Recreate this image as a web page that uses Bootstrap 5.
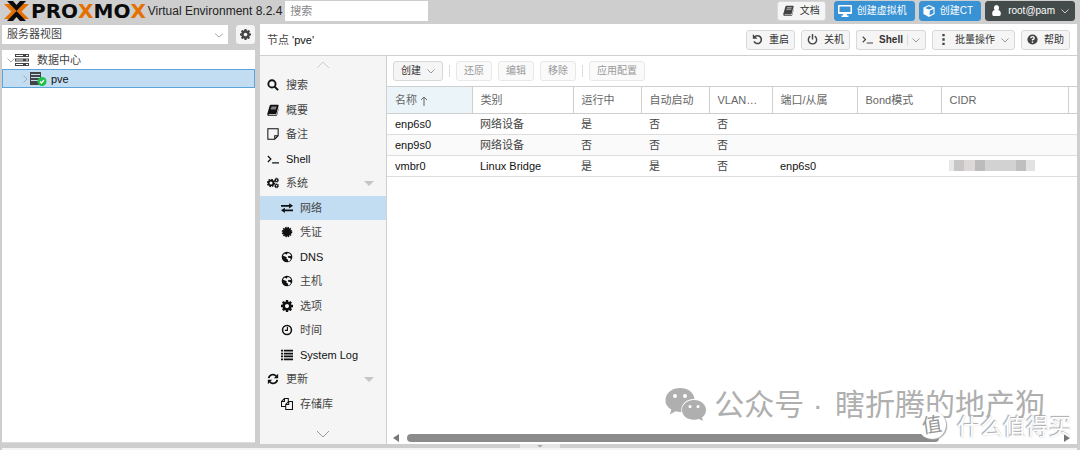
<!DOCTYPE html>
<html lang="zh-CN">
<head>
<meta charset="utf-8">
<meta name="viewport" content="width=device-width, initial-scale=1">
<title>pve - Proxmox Virtual Environment</title>
<link href="https://cdn.jsdelivr.net/npm/bootstrap@5.3.0/dist/css/bootstrap.min.css" rel="stylesheet">
<style>
body{font-family:"Liberation Sans","Noto Sans CJK SC",sans-serif;font-size:11px;line-height:16px;background:#cecece;color:#111;padding:0 3px 0 2px}
svg{fill:currentColor;flex:none}
.ln{fill:none;stroke:currentColor}
.ic{width:12px;height:12px}
.chev{width:8px;height:8px;color:#aaa}
a{color:inherit;text-decoration:none}
.zh{color:#444}
.gap-6{gap:6px}
.top-bar{height:24px;padding:0 2px 3px 1px}
.brand-word{font:bold 20px/20px "DejaVu Sans",sans-serif;color:#0b0b0b;margin-left:1px}
.brand-word b{color:#e57000}
.version{font-size:12px;color:#222;margin:0 3px 0 2px}
.find-box{width:143px;height:20px;border:0;border-radius:0;padding:0 5px;font-size:11px}
.find-box::placeholder{color:#888}
.bt{height:20px;padding:0 5px;gap:6px;font-size:10px;line-height:14px;display:inline-flex;align-items:center;border:1px solid #d8d8d8;border-radius:3px;background:#f5f5f5;color:#333;white-space:nowrap}
.bt:disabled{color:#999;background:#fafafa;border-color:#e8e8e8;opacity:1}
.bt svg{color:#444}
.bt .ic{width:11px;height:11px}
.bt .chev{color:#999}
.bt-tool{padding:0 7px}
.bt-blue,.bt-blue svg{background:#3892d4;border-color:#3892d4;color:#fff}
.bt-blue{padding:0 7px 0 3px;gap:5px}
.bt-dark,.bt-dark svg{background:#444b4b;border-color:#444b4b;color:#fff}
.bt-dark .chev{color:#ccc}
.bt-dark{gap:6px}
.vsep{width:1px;height:12px;background:#ddd}
.tool-row .vsep{margin:0 6px}
.side{width:253px}
.view-row{margin:1px 0 6px}
.view-pick{height:19px;border:0;border-radius:0;padding:0 24px 0 5px;font-size:11px;line-height:19px;color:#444;background:#fff url("data:image/svg+xml,%3Csvg xmlns='http://www.w3.org/2000/svg' viewBox='0 0 8 8'%3E%3Cpath d='M0 2.500l4 3.500 4-3.500' fill='none' stroke='%23aaa'/%3E%3C/svg%3E") no-repeat right 5px center/8px 8px}
.gear{width:19px;height:19px;padding:0;justify-content:center;border:0}
.tree-pane{background:#fff;border-bottom:1px solid #ddd;margin-bottom:1px}
.tree-row{height:19px;border:1px solid transparent;padding-left:4px}
.tree-row.on{background:#c2ddf2;border-color:#5ba4dc;padding-left:18px;color:#111}
.main-pane{margin-left:1px;min-width:0}
.title-bar{height:32px;padding:0 7px;border-bottom:1px solid #cfcfcf}
.menu{width:127px;background:#f5f5f5;border-right:1px solid #cfcfcf}
.menu a{flex:1 1 0;padding-left:7px;gap:7px}
.menu a.sub{padding-left:21px}
.menu a.on{background:#c2ddf2}
.caret{width:0;border:5px solid transparent;border-top-color:#c6c6c6;border-bottom:0;margin-left:auto;margin-right:12px}
.menu-up{height:17px}
.menu-down{height:28px}
.net-pane{min-width:0}
.tool-row{height:31px;padding:0 6px;border-bottom:1px solid #cfcfcf}
.grid{table-layout:fixed;width:100%;border-collapse:collapse}
.grid th{height:26px;font-weight:normal;color:#666;border-right:1px solid #cfcfcf;border-bottom:1px solid #cfcfcf}
.grid th:last-child{border-right:0}
.grid th:first-child{background:#eaf4f9}
.grid th,.grid td{padding:0 8px;overflow:hidden;text-overflow:ellipsis;white-space:nowrap}
.grid th:last-child,.grid td:last-child{padding:0}
.grid td{height:21px;border-bottom:1px solid #ddd}
.grid tbody tr:nth-child(2){background:#fafafa}
.masked{width:86px;height:11px;background:linear-gradient(90deg,#e8e8e8 0 6%,#c6c6c6 6% 18%,#dcd8d8 18% 30%,#bcbcbc 30% 42%,#d2d2d2 42% 78%,#bfbfbf 78% 90%,#e2e2e2 90%)}
.scroller{height:8px;margin:0 7px 2px 6px;gap:8px}
.thumb{height:8px;border-radius:4px;background:#8b8b8b}
.tri{width:6px;height:8px;color:#777}
.splitter{height:4px}
.splitter span{width:40px;height:4px;background:#e6e6e6}
.log-pane{height:2px;background:#f5f5f5}
.wm{right:35px;bottom:23px;gap:7px;color:#afafaf;font:30px/44px "Noto Sans CJK SC",sans-serif;white-space:nowrap}
.wm .dot{font-family:"Liberation Sans",sans-serif;padding-right:4px}
.wm2{right:8px;bottom:9px;gap:11px;color:#fff;font:23px/32px "Noto Sans CJK SC",sans-serif;white-space:nowrap;text-shadow:-1px -1px 1px #aaa,0 0 1px #bbb}
.wm2 i{width:28px;height:28px;border-radius:50%;background:#fff;color:#999;font:20px/26px "Noto Sans CJK SC",sans-serif;text-align:center;box-shadow:1px 1px 1px #aaa;text-shadow:none;transform:rotate(-8deg)}
</style>
</head>
<body class="d-flex flex-column min-vh-100 position-relative overflow-hidden">
<svg class="d-none">
<symbol id="gear" viewBox="0 128 1536 1536"><path fill-rule="evenodd" d="M1024 896q0 106-75 181t-181 75-181-75-75-181 75-181 181-75 181 75 75 181zm512-109v222q0 12-8 23t-20 13l-185 28q-19 54-39 91 35 50 107 138 10 12 10 25t-9 23q-27 37-99 108t-94 71q-12 0-26-9l-138-108q-44 23-91 38-16 136-29 186-7 28-36 28h-222q-14 0-24-8t-12-22l-28-184q-49-16-90-37l-141 107q-10 9-25 9-14 0-25-11-126-114-165-168-7-10-7-23 0-12 8-23 15-21 51-66t54-71q-27-50-41-99l-183-27q-13-2-21-12t-8-24v-222q0-12 8-23t19-13l186-28q14-46 39-92-40-57-107-138-10-12-10-24 0-10 9-23 26-36 98-107t95-72q13 0 26 10l138 107q44-23 91-38 16-136 29-186 7-28 36-28h222q14 0 24 8t12 22l28 184q49 16 90 37l142-107q9-9 24-9 13 0 25 10 129 119 165 170 7 8 7 22 0 12-8 23-15 21-51 66t-54 71q26 50 41 98l183 28q13 2 21 12t8 24z"/></symbol>
<symbol id="book" viewBox="0 0 14 14"><path d="M4.500 1h8.300q1 .2.700 1.200L11 11q-.3 1-1.300 1H2.500q-.8 0-.8.500t.8.500H10q1 0 1.400-1L14 4v.800L11.900 12.500Q11.400 14 10 14H2.300Q0 14 .3 11.600L3 2.200Q3.400 1 4.500 1zm.7 2.300-.3.900h6l.3-.9zm-.7 2-.3.900h6l.3-.9z" fill-rule="evenodd"/></symbol>
<symbol id="down" viewBox="0 0 8 8"><path class="ln" d="M.5 2.500 4 6l3.500-3.500"/></symbol>
<symbol id="right" viewBox="0 0 8 8"><path class="ln" d="M2.500.5 6 4 2.500 7.500"/></symbol>
<symbol id="wide-down" viewBox="0 0 14 8"><path class="ln" d="M1 1l6 6 6-6"/></symbol>
<symbol id="wide-up" viewBox="0 0 14 8"><path class="ln" d="M1 7l6-6 6 6"/></symbol>
<symbol id="prompt" viewBox="0 0 14 14"><path class="ln" stroke-width="1.400" d="M1 3.500 4.500 7 1 10.500M6 11.500h8"/></symbol>
<symbol id="globe" viewBox="0 0 14 14"><path fill-rule="evenodd" d="M7 .8a6.200 6.200 0 1 0 0 12.400A6.200 6.200 0 0 0 7 .8zm1 1.500 2.300 1 1.500 2-1.300.7-1.300-.6-1.300 1.200.4 1.200 2.300.4.900 1.300-1.500 2.200-1.500.6-.5-2.300L6.300 9l.5-1.500L5 6.300 3 5.800l-.6-.7 1.500-2 1.500.3 1 .9L7.500 3z"/></symbol>
<symbol id="refresh" viewBox="0 0 14 14"><path class="ln" stroke-width="2" d="M2 6a5 5 0 0 1 8.800-2.300M12 8a5 5 0 0 1-8.800 2.300"/><path d="M13 1v5H8zM1 13V8h5z"/></symbol>
</svg>

<header class="top-bar d-flex align-items-center">
  <svg width="27" height="20" viewBox="0 0 27 20"><path fill="#e57000" d="M1 3h6l6 6.500v1L7 18H1l7.500-7.500zM26 3h-6l-6 6.500v1l6 7.500h6l-7.500-7.500z"/><path fill="#0b0b0b" d="M4 0h6l3.500 4L17 0h6l-9.500 10zM4 20h6l3.500-4 3.500 4h6l-9.500-10z"/></svg>
  <span class="brand-word">PRO<b>X</b>MO<b>X</b></span>
  <span class="version">Virtual Environment 8.2.4</span>
  <input class="form-control find-box" type="search" placeholder="搜索" aria-label="搜索">
  <div class="d-flex ms-auto gap-1">
    <button class="bt me-1"><svg class="ic"><use href="#book"/></svg>文档</button>
    <button class="bt bt-blue"><svg width="14" height="12" viewBox="0 0 14 12"><path fill-rule="evenodd" d="M1 0h12q1 0 1 1v7q0 1-1 1H9v1.500h1.500V12h-7v-1.500H5V9H1Q0 9 0 8V1q0-1 1-1zm.5 1.500v5.500h11V1.500z"/></svg>创建虚拟机</button>
    <button class="bt bt-blue"><svg width="12" height="12" viewBox="0 0 14 14"><path fill-rule="evenodd" d="M7 0l6.500 2.800v7.800L7 14 .5 10.600V2.800zm0 1.500L2.500 3.400 7 5.300l4.500-1.900zM7.800 6.600v5.300l4.400-2.200V4.800z"/></svg>创建CT</button>
    <button class="bt bt-dark"><svg class="ic" viewBox="0 0 14 14"><path d="M7 0a3.300 3.800 0 0 1 2.300 6.500Q12.500 7 12.500 11.500 12.500 14 10.500 14h-7q-2 0-2-2.500Q1.500 7 4.700 6.500A3.300 3.800 0 0 1 7 0z"/></svg>root@pam<svg class="chev"><use href="#down"/></svg></button>
  </div>
</header>

<div class="d-flex flex-fill">
  <aside class="side flex-shrink-0 d-flex flex-column me-1">
    <div class="view-row d-flex justify-content-between">
      <select class="form-select view-pick me-2" aria-label="视图"><option>服务器视图</option></select>
      <button class="bt gear flex-shrink-0" aria-label="设置"><svg class="ic"><use href="#gear"/></svg></button>
    </div>
    <div class="tree-pane flex-fill">
      <div class="tree-row d-flex align-items-center zh"><svg class="chev"><use href="#down"/></svg>
        <svg width="14" height="12" viewBox="0 0 14 12" class="me-2"><path fill-rule="evenodd" d="M0 0h14v3H0zm0 4.500h14v3H0zM0 9h14v3H0zm1 1v1h7v-1zm0-4.500v1h7v-1zM1 1v1h7V1zm10 0v1h2V1zm0 4.500v1h2v-1zm0 4.500v1h2v-1z"/></svg>数据中心</div>
      <div class="tree-row on d-flex align-items-center"><svg class="chev"><use href="#right"/></svg>
        <svg width="18" height="14" viewBox="0 0 18 14" class="me-1"><path fill="#444" fill-rule="evenodd" d="M1 0h11v13H1zm1 2v1h9V2zm0 3v1h9V5zm0 3v1h9V8z"/><circle cx="13" cy="9.500" r="4.500" fill="#21bf4b"/><path d="M11 9.500 12.500 11l2.500-3" fill="none" stroke="#fff" stroke-width="1.300"/></svg>pve</div>
    </div>
  </aside>

  <main class="main-pane flex-fill d-flex flex-column bg-white">
    <div class="title-bar d-flex align-items-center">
      <span><span class="zh">节点</span> 'pve'</span>
      <div class="d-flex ms-auto gap-6">
        <button class="bt"><svg class="ic" viewBox="0 0 14 14"><path class="ln" stroke-width="2" d="M3 4a5 5 0 1 1-.5 5.500"/><path d="M1 0v6h6z"/></svg>重启</button>
        <button class="bt"><svg class="ic" viewBox="0 0 14 14"><path class="ln" stroke-width="1.800" d="M4.200 2.800a5.300 5.300 0 1 0 5.600 0M7 0v7"/></svg>关机</button>
        <div class="btn-group">
          <button class="bt border-end-0 rounded-end-0 pe-1"><svg class="ic"><use href="#prompt"/></svg><b>Shell</b></button>
          <button class="bt gap-1 border-start-0 rounded-start-0 ps-0" aria-label="Shell 选项"><span class="vsep"></span><svg class="chev"><use href="#down"/></svg></button>
        </div>
        <button class="bt"><svg class="ic" viewBox="0 0 14 14"><path d="M5.500 0h3v3h-3zm0 5.500h3v3h-3zm0 5.500h3v3h-3z"/></svg>批量操作<svg class="chev"><use href="#down"/></svg></button>
        <button class="bt"><svg class="ic" viewBox="0 0 14 14"><circle cx="7" cy="7" r="6.500"/><path d="M4.800 5.300Q5 3.300 7 3.300t2.200 1.800Q9.200 6.500 7 7.300v1" fill="none" stroke="#fff" stroke-width="1.700"/><path fill="#fff" d="M6.100 9.500h1.800v1.700H6.100z"/></svg>帮助</button>
      </div>
    </div>
    <div class="d-flex flex-fill">
      <nav class="menu flex-shrink-0 d-flex flex-column">
        <div class="menu-up d-flex justify-content-center align-items-center"><svg width="14" height="8" color="#ccc"><use href="#wide-up"/></svg></div>
        <a href="#" class="d-flex align-items-center zh"><svg class="ic" color="#111" viewBox="0 0 14 14"><path class="ln" stroke-width="2.200" d="M10 5.700a4.200 4.200 0 1 1-8.400 0 4.200 4.200 0 0 1 8.400 0zM9 9l4 4"/></svg>搜索</a>
        <a href="#" class="d-flex align-items-center zh"><svg class="ic" color="#111"><use href="#book"/></svg>概要</a>
        <a href="#" class="d-flex align-items-center zh"><svg class="ic" color="#111" viewBox="0 0 14 14"><path class="ln" stroke-width="1.200" d="M1 1h12v8l-4 4H1zM13 9H9v4"/></svg>备注</a>
        <a href="#" class="d-flex align-items-center"><svg class="ic"><use href="#prompt"/></svg>Shell</a>
        <a href="#" class="d-flex align-items-center zh"><svg class="ic" color="#111" viewBox="0 0 15 14"><circle cx="5" cy="7" r="3" class="ln" stroke-width="2.200"/><circle cx="5" cy="7" r="4.500" class="ln" stroke-width="1.500" stroke-dasharray="2 1.500"/><circle cx="12" cy="3.500" r="1.600" class="ln" stroke-width="1.500"/><circle cx="12" cy="3.500" r="2.600" class="ln" stroke-dasharray="1.200 .9"/><circle cx="12" cy="10.500" r="1.600" class="ln" stroke-width="1.500"/><circle cx="12" cy="10.500" r="2.600" class="ln" stroke-dasharray="1.200 .9"/></svg>系统<span class="caret"></span></a>
        <a href="#" class="sub on d-flex align-items-center zh"><svg class="ic" color="#111" viewBox="0 0 14 14"><path d="M0 3.500h9.500V1.500L14 4.500l-4.500 3V5.500H0zM14 8.700H4.500v-2L0 9.700l4.500 3v-2H14z"/></svg>网络</a>
        <a href="#" class="sub d-flex align-items-center zh"><svg class="ic" color="#111" viewBox="0 0 14 14"><circle cx="7" cy="7" r="5"/><circle cx="7" cy="7" r="5.300" class="ln" stroke-width="1.700" stroke-dasharray="1.700 1.070"/></svg>凭证</a>
        <a href="#" class="sub d-flex align-items-center"><svg class="ic"><use href="#globe"/></svg>DNS</a>
        <a href="#" class="sub d-flex align-items-center zh"><svg class="ic" color="#111"><use href="#globe"/></svg>主机</a>
        <a href="#" class="sub d-flex align-items-center zh"><svg class="ic" color="#111"><use href="#gear"/></svg>选项</a>
        <a href="#" class="sub d-flex align-items-center zh"><svg class="ic" color="#111" viewBox="0 0 14 14"><circle cx="7" cy="7" r="5.200" class="ln" stroke-width="1.800"/><path class="ln" stroke-width="1.300" d="M7.500 3.500v4H4.500"/></svg>时间</a>
        <a href="#" class="sub d-flex align-items-center"><svg class="ic" viewBox="0 0 14 14"><path d="M0 1h2.500v2H0zm3.500 0H14v2H3.500zM0 4.300h2.500v2H0zm3.500 0H14v2H3.500zM0 7.600h2.500v2H0zm3.500 0H14v2H3.500zM0 11h2.500v2H0zm3.500 0H14v2H3.500z"/></svg>System Log</a>
        <a href="#" class="d-flex align-items-center zh"><svg class="ic" color="#111"><use href="#refresh"/></svg>更新<span class="caret"></span></a>
        <a href="#" class="sub d-flex align-items-center zh"><svg class="ic" color="#111" viewBox="0 0 14 14"><path class="ln" stroke-width="1.200" d="M5 10H.6V4L4 .6h4.500V4M4 .6V4H.6M5.500 7.500 9 4h4.400v9.400H5.500zM9 4v3.500H5.500"/></svg>存储库</a>
        <div class="menu-down d-flex justify-content-center align-items-center pt-2"><svg width="14" height="8" color="#999"><use href="#wide-down"/></svg></div>
      </nav>
      <section class="net-pane flex-fill d-flex flex-column">
        <div class="tool-row d-flex align-items-center">
          <button class="bt bt-tool">创建<svg class="chev"><use href="#down"/></svg></button>
          <span class="vsep"></span>
          <div class="d-flex gap-6"><button class="bt bt-tool" disabled>还原</button><button class="bt bt-tool" disabled>编辑</button><button class="bt bt-tool" disabled>移除</button></div>
          <span class="vsep"></span>
          <button class="bt bt-tool" disabled>应用配置</button>
        </div>
        <table class="grid">
          <colgroup><col width="85"><col width="101"><col width="68"><col width="68"><col width="63"><col width="85"><col width="84"><col width="127"><col></colgroup>
          <thead><tr><th>名称 <svg width="8" height="10" viewBox="0 0 8 10"><path class="ln" d="M4 10V1M1 4l3-3 3 3"/></svg></th><th>类别</th><th>运行中</th><th>自动启动</th><th>VLAN感知</th><th>端口/从属</th><th>Bond模式</th><th>CIDR</th><th></th></tr></thead>
          <tbody>
            <tr><td>enp6s0</td><td class="zh">网络设备</td><td class="zh">是</td><td class="zh">否</td><td class="zh">否</td><td></td><td></td><td></td><td></td></tr>
            <tr><td>enp9s0</td><td class="zh">网络设备</td><td class="zh">否</td><td class="zh">否</td><td class="zh">否</td><td></td><td></td><td></td><td></td></tr>
            <tr><td>vmbr0</td><td>Linux Bridge</td><td class="zh">是</td><td class="zh">是</td><td class="zh">否</td><td>enp6s0</td><td></td><td><div class="masked"></div></td><td></td></tr>
          </tbody>
        </table>
        <div class="scroller d-flex mt-auto">
          <svg class="tri" viewBox="0 0 6 8"><path d="M6 0v8L0 4z"/></svg>
          <div class="flex-fill"><div class="thumb" style="width:82%"></div></div>
          <svg class="tri" viewBox="0 0 6 8"><path d="M0 0v8l6-4z"/></svg>
        </div>
      </section>
    </div>
  </main>
</div>
<div class="splitter d-flex justify-content-center"><span class="d-flex justify-content-center"><svg width="8" height="4" viewBox="0 0 8 4" color="#aaa"><path d="M1 1h6L4 3.500z"/></svg></span></div>
<footer class="log-pane"></footer>

<div class="wm position-absolute d-flex align-items-center">
  <svg width="42" height="34" viewBox="0 0 42 34"><path fill-rule="evenodd" d="M15 1c8 0 14 4.500 14.500 11C22 11.500 15 17 16.500 25q-3 .3-6-.7L5 27.500l1.300-5Q0 19 .5 12.500C1 5.500 7.500 1 15 1zM10 7a2 2 0 1 0 0 4 2 2 0 0 0 0-4zm10 0a2 2 0 1 0 0 4 2 2 0 0 0 0-4z"/><path fill-rule="evenodd" d="M29 13c7 0 12 4.500 12 10q0 4.500-4 7.500l1 3.500-4-2q-2.500.8-5 .8c-7 0-12-4.300-12-9.800s5-10 12-10zm-4 5a1.600 1.600 0 1 0 0 3.200 1.600 1.600 0 0 0 0-3.200zm8 0a1.600 1.600 0 1 0 0 3.200 1.600 1.600 0 0 0 0-3.200z"/></svg>
  <span>公众号<span class="dot"> · </span>瞎折腾的地产狗</span>
</div>
<div class="wm2 position-absolute d-flex align-items-center"><i>值</i><span>什么值得买</span></div>
<script src="https://cdn.jsdelivr.net/npm/bootstrap@5.3.0/dist/js/bootstrap.bundle.min.js"></script>
</body>
</html>
